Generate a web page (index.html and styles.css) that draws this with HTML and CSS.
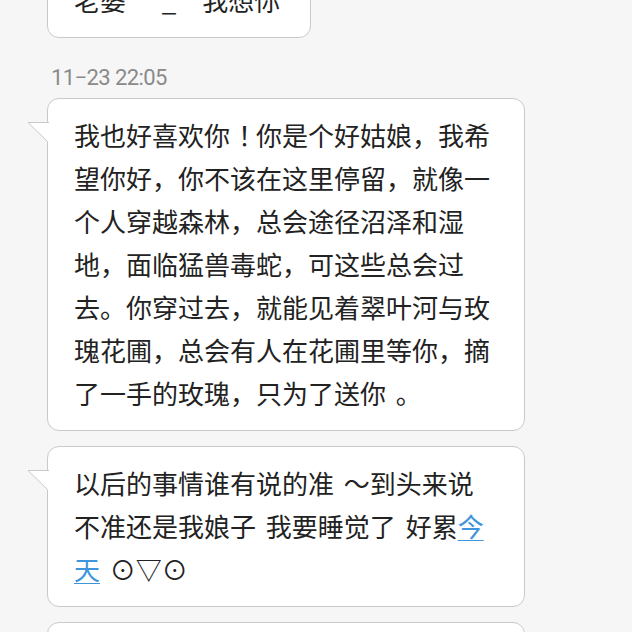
FILE: index.html
```html
<!DOCTYPE html>
<html lang="zh-CN">
<head>
<meta charset="utf-8">
<title>Chat</title>
<link rel="stylesheet" href="styles.css">
</head>
<body>
<div class="chat">
  <div class="bubble bubble-first">
    <p class="msg">老婆 　_　我想你</p>
  </div>

  <div class="time">11−23 22:05</div>

  <div class="bubble">
    <svg class="tail" width="22" height="22" viewBox="0 0 22 22"><polygon points="1,0.5 22,0.5 22,21 20.5,19.5" fill="#fff"/><polyline points="22,0.5 1,0.5 20.5,19.5" fill="none" stroke="#c9c9c9" stroke-width="1"/></svg>
    <p class="msg">我也好喜欢你<span class="bang">！</span>你是个好姑娘，我希望你好，你不该在这里停留，就像一个人穿越森林，总会途径沼泽和湿地，面临猛兽毒蛇，可这些总会过去。你穿过去，就能见着翠叶河与玫瑰花圃，总会有人在花圃里等你，摘了一手的玫瑰，只为了送你 。</p>
  </div>

  <div class="bubble">
    <svg class="tail" width="22" height="22" viewBox="0 0 22 22"><polygon points="1,0.5 22,0.5 22,21 20.5,19.5" fill="#fff"/><polyline points="22,0.5 1,0.5 20.5,19.5" fill="none" stroke="#c9c9c9" stroke-width="1"/></svg>
    <p class="msg">以后的事情谁有说的准 ～到头来说不准还是我娘子 我要睡觉了 好累<a class="link" href="#">今天</a> ⊙▽⊙</p>
  </div>

  <div class="bubble">
    <svg class="tail" width="22" height="22" viewBox="0 0 22 22"><polygon points="1,0.5 22,0.5 22,21 20.5,19.5" fill="#fff"/><polyline points="22,0.5 1,0.5 20.5,19.5" fill="none" stroke="#c9c9c9" stroke-width="1"/></svg>
    <p class="msg">晚安，好梦。明天见，我会一直在这里等你回来的，不要忘记我哦。</p>
  </div>
</div>
</body>
</html>
```

FILE: styles.css
```css
html, body {
  margin: 0;
  padding: 0;
  background: #f6f6f6;
  overflow: hidden;
}

.chat {
  display: flex;
  flex-direction: column;
  align-items: flex-start;
  padding-left: 47px;
  margin-top: -37px;
}

.bubble {
  position: relative;
  box-sizing: border-box;
  max-width: 478px;
  background: #fff;
  border: 1px solid #c9c9c9;
  border-radius: 12px;
  padding: 14px 26px 16px 26px;
  margin-bottom: 15px;
}

.bubble-first {
  padding-right: 30px;
}

.tail {
  position: absolute;
  left: -21px;
  top: 23px;
  display: block;
}

.msg {
  margin: 0;
  font-family: "Noto Sans CJK SC", "Noto Sans", sans-serif;
  font-size: 26px;
  line-height: 43px;
  color: #222;
  word-spacing: 4px;
  white-space: pre-wrap;
}

.bang {
  display: inline-block;
  width: 26px;
  text-align: center;
  text-indent: 8px;
}

.link {
  color: #3f95dc;
  text-decoration: underline;
  text-decoration-thickness: 1px;
  text-underline-offset: 3px;
}

.time {
  margin: 12px 0 8px 4px;
  font-family: Roboto, "Liberation Sans", sans-serif;
  font-size: 22px;
  line-height: 25px;
  letter-spacing: -0.6px;
  color: #8a8a8a;
}
```
